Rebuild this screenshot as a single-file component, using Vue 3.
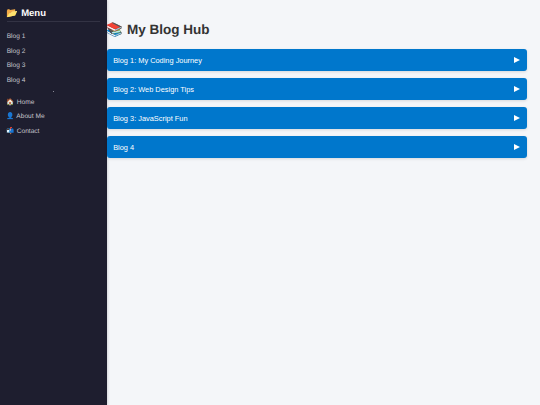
<template>
  <div class="layout">
    <aside class="sidebar">
      <h2 class="menu-title">📂 Menu</h2>
      <ul class="blog-links">
        <li v-for="blog in blogs" :key="blog.id">{{ blog.short }}</li>
      </ul>
      <div class="divider"></div>
      <ul class="page-links">
        <li v-for="page in pages" :key="page">{{ page }}</li>
      </ul>
    </aside>
    <main class="content">
      <h1 class="page-title">📚 My Blog Hub</h1>
      <div class="blog-list">
        <button v-for="blog in blogs" :key="blog.id" class="blog-row">
          <span>{{ blog.title }}</span>
          <span class="arrow"></span>
        </button>
      </div>
    </main>
  </div>
</template>

<script setup>
const blogs = [
  { id: 1, short: 'Blog 1', title: 'Blog 1: My Coding Journey' },
  { id: 2, short: 'Blog 2', title: 'Blog 2: Web Design Tips' },
  { id: 3, short: 'Blog 3', title: 'Blog 3: JavaScript Fun' },
  { id: 4, short: 'Blog 4', title: 'Blog 4' }
]

const pages = ['🏠 Home', '👤 About Me', '📬 Contact']
</script>

<style>
html,
body {
  margin: 0;
  background: #f4f6f9;
}
</style>

<style scoped>
.layout {
  display: flex;
  width: 540px;
  height: 405px;
  overflow: hidden;
  font-family: "Liberation Sans", Arial, sans-serif;
  text-rendering: geometricPrecision;
  background: #f4f6f9;
}

.sidebar {
  box-sizing: border-box;
  width: 106.5px;
  flex: none;
  padding: 6px 6.7px 0;
  background: #1e1e2f;
  box-shadow: 1px 0 2px rgba(0, 0, 0, 0.12);
}

.menu-title {
  margin: 0;
  height: 15px;
  line-height: 15px;
  font-size: 9.5px;
  font-weight: 700;
  color: #fff;
  border-bottom: 1px solid #333344;
}

ul {
  margin: 0;
  padding: 0;
  list-style: none;
}

.blog-links {
  margin-top: 8px;
}

.blog-links li,
.page-links li {
  height: 14.5px;
  line-height: 14.5px;
  font-size: 6.6px;
  color: #c4c4cc;
  white-space: nowrap;
}

.divider {
  width: 1px;
  height: 1px;
  margin: 3px 0 3px 46px;
  background: #8a8a96;
}

.page-links {
  margin-top: 3.5px;
}

.page-links li {
  height: 14.8px;
}

.content {
  flex: 1;
  padding: 20px 13px 0 0;
}

.page-title {
  margin: 0 0 9px;
  height: 20px;
  line-height: 20px;
  font-size: 13.5px;
  font-weight: 700;
  color: #333;
  white-space: nowrap;
}

.blog-list {
  display: flex;
  flex-direction: column;
  gap: 7px;
}

.blog-row {
  display: flex;
  align-items: center;
  justify-content: space-between;
  box-sizing: border-box;
  width: 100%;
  height: 22px;
  padding: 0 7px 0 6.7px;
  border: 0;
  border-radius: 3px;
  background: #0077cc;
  box-shadow: 0 1px 3px rgba(0, 0, 0, 0.12);
  color: #fff;
  font-family: inherit;
  font-size: 7.4px;
  text-align: left;
}

.arrow {
  width: 0;
  height: 0;
  border-left: 6px solid #fff;
  border-top: 3px solid transparent;
  border-bottom: 3px solid transparent;
}
</style>
